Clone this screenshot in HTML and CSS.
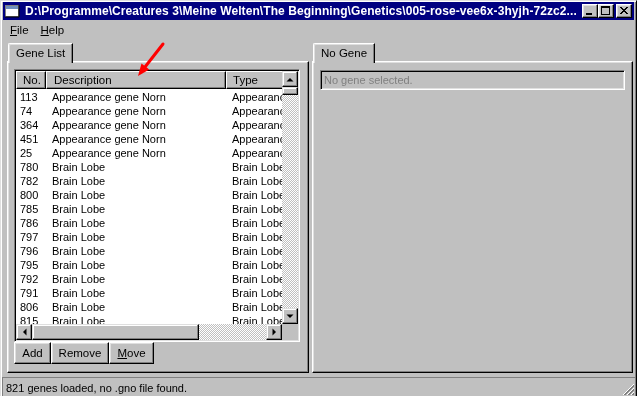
FILE: index.html
```html
<!DOCTYPE html>
<html lang="de">
<head>
    <meta charset="UTF-8">
    <title>Genetics Kit</title>
    <link rel="stylesheet" href="styles.css">
</head>
<body>
    <div class="window">
        <div class="titlebar">
            <svg class="app-icon" width="16" height="16" viewBox="0 0 16 16">
                <rect x="1.5" y="2.5" width="13" height="11" fill="#fff" stroke="#808080"/>
                <rect x="2" y="3" width="12" height="3" fill="#6f8fbf"/>
                <line x1="1" y1="14" x2="15" y2="14" stroke="#000"/>
                <line x1="15" y1="2" x2="15" y2="14" stroke="#000"/>
            </svg>
            <span class="title">D:\Programme\Creatures 3\Meine Welten\The Beginning\Genetics\005-rose-vee6x-3hyjh-72zc2...</span>
            <div class="caption-buttons">
                <div class="cap-btn">
                    <svg width="12" height="10" viewBox="0 0 12 10"><rect x="2" y="7" width="6" height="2" fill="#000"/></svg>
                </div>
                <div class="cap-btn">
                    <svg width="12" height="10" viewBox="0 0 12 10"><rect x="1.5" y="0.5" width="8" height="8" fill="none" stroke="#000"/><rect x="1" y="0" width="9" height="2" fill="#000"/></svg>
                </div>
                <div class="cap-btn close">
                    <svg width="12" height="10" viewBox="0 0 12 10"><path d="M2 1 L9 8 M3 1 L10 8 M9 1 L2 8 M10 1 L3 8" stroke="#000" stroke-width="1"/></svg>
                </div>
            </div>
        </div>

        <div class="menubar">
            <span class="menu-item"><u>F</u>ile</span>
            <span class="menu-item"><u>H</u>elp</span>
        </div>

        <div class="main">
            <div class="pane pane-left">
                <div class="tabs"><div class="tab active">Gene List</div></div>
                <div class="tab-panel">
                    <div class="listview">
                        <div class="lv-content">
                            <div class="lv-header">
                                <div class="hcell col-no">No.</div>
                                <div class="hcell col-desc">Description</div>
                                <div class="hcell col-type">Type</div>
                            </div>
                            <div class="lv-rows" id="rows"></div>
                        </div>
                        <div class="vscroll">
                            <div class="sb-btn">
                                <svg width="8" height="5" viewBox="0 0 8 5"><path d="M0.5 4.5 L4 1 L7.5 4.5Z" fill="#000"/></svg>
                            </div>
                            <div class="sb-thumb v"></div>
                            <div class="sb-track"></div>
                            <div class="sb-btn">
                                <svg width="8" height="5" viewBox="0 0 8 5"><path d="M0.5 0.5 L4 4 L7.5 0.5Z" fill="#000"/></svg>
                            </div>
                        </div>
                        <div class="hscroll">
                            <div class="sb-btn">
                                <svg width="5" height="8" viewBox="0 0 5 8"><path d="M4.5 0.5 L1 4 L4.5 7.5Z" fill="#000"/></svg>
                            </div>
                            <div class="sb-thumb h"></div>
                            <div class="sb-track"></div>
                            <div class="sb-btn">
                                <svg width="5" height="8" viewBox="0 0 5 8"><path d="M0.5 0.5 L4 4 L0.5 7.5Z" fill="#000"/></svg>
                            </div>
                        </div>
                        <div class="sb-corner"></div>
                    </div>
                    <div class="button-row">
                        <div class="btn btn-add">Add</div>
                        <div class="btn btn-remove">Remove</div>
                        <div class="btn btn-move"><u>M</u>ove</div>
                    </div>
                </div>
            </div>

            <div class="pane pane-right">
                <div class="tabs"><div class="tab active">No Gene</div></div>
                <div class="tab-panel">
                    <div class="field disabled">No gene selected.</div>
                </div>
            </div>
        </div>

        <div class="statusbar">
            <div class="status-field">821 genes loaded, no .gno file found.</div>
            <svg class="grip" width="13" height="13" viewBox="0 0 13 13">
                <path d="M12 1 L1 12 M12 5 L5 12 M12 9 L9 12" stroke="#fff"/>
                <path d="M12 2 L2 12 M12 3 L3 12 M12 6 L6 12 M12 7 L7 12 M12 10 L10 12 M12 11 L11 12" stroke="#808080"/>
            </svg>
        </div>

        <svg class="annotation" width="40" height="40" viewBox="0 0 40 40">
            <line x1="32" y1="3" x2="14.4" y2="25.5" stroke="#f00" stroke-width="3" stroke-linecap="round"/>
            <polygon points="7,35 18.3,28.6 10.5,22.4" fill="#f00"/>
        </svg>
    </div>

    <script>
        const genes = [
            ['113', 'Appearance gene Norn', 'Appearance'],
            ['74', 'Appearance gene Norn', 'Appearance'],
            ['364', 'Appearance gene Norn', 'Appearance'],
            ['451', 'Appearance gene Norn', 'Appearance'],
            ['25', 'Appearance gene Norn', 'Appearance'],
            ['780', 'Brain Lobe', 'Brain Lobe'],
            ['782', 'Brain Lobe', 'Brain Lobe'],
            ['800', 'Brain Lobe', 'Brain Lobe'],
            ['785', 'Brain Lobe', 'Brain Lobe'],
            ['786', 'Brain Lobe', 'Brain Lobe'],
            ['797', 'Brain Lobe', 'Brain Lobe'],
            ['796', 'Brain Lobe', 'Brain Lobe'],
            ['795', 'Brain Lobe', 'Brain Lobe'],
            ['792', 'Brain Lobe', 'Brain Lobe'],
            ['791', 'Brain Lobe', 'Brain Lobe'],
            ['806', 'Brain Lobe', 'Brain Lobe'],
            ['815', 'Brain Lobe', 'Brain Lobe']
        ];

        const rows = document.getElementById('rows');
        genes.forEach(function (g) {
            const row = document.createElement('div');
            row.className = 'lv-row';
            row.innerHTML = '<div class="cell col-no">' + g[0] + '</div>' +
                '<div class="cell col-desc">' + g[1] + '</div>' +
                '<div class="cell col-type">' + g[2] + '</div>';
            rows.appendChild(row);
        });
    </script>
</body>
</html>
```

FILE: styles.css
```css
* {
    box-sizing: border-box;
}

body {
    margin: 0;
    background: #c0c0c0;
    font-family: "Liberation Sans", Arial, sans-serif;
    font-size: 11px;
    color: #000;
    overflow: hidden;
}

.window {
    position: relative;
    width: 637px;
    height: 396px;
    display: flex;
    flex-direction: column;
    padding: 1px 1px 0 1px;
    border-top: 1px solid #dfdfdf;
    border-left: 1px solid #dfdfdf;
    border-right: 1px solid #000;
    box-shadow: inset 1px 1px #fff, inset -1px 0 #808080;
    will-change: transform;
}

/* title bar */
.titlebar {
    height: 18px;
    margin: 0 1px;
    background: #000080;
    color: #fff;
    display: flex;
    align-items: center;
    padding: 0 2px 0 1px;
}

.app-icon {
    flex: none;
    margin-right: 5px;
}

.title {
    flex: 1;
    font-weight: bold;
    font-size: 12px;
    letter-spacing: 0.08px;
    white-space: nowrap;
    overflow: hidden;
}

.caption-buttons {
    display: flex;
    flex: none;
}

.cap-btn {
    width: 16px;
    height: 14px;
    background: #c0c0c0;
    border: 1px solid;
    border-color: #fff #000 #000 #fff;
    box-shadow: inset -1px -1px #808080, inset 1px 1px #dfdfdf;
    display: flex;
    align-items: center;
    justify-content: center;
}

.cap-btn.close {
    margin-left: 2px;
}

/* menu */
.menubar {
    height: 19px;
    display: flex;
    align-items: center;
    padding-left: 2px;
}

.menu-item {
    padding: 0 6px;
    font-size: 11.5px;
}

/* panes */
.main {
    display: flex;
    padding: 4px 1px 0 5px;
    height: 334px;
}

.pane {
    display: flex;
    flex-direction: column;
    height: 330px;
}

.pane-left {
    width: 302px;
}

.pane-right {
    width: 321px;
    margin-left: 3px;
}

.tabs {
    display: flex;
    height: 18px;
    position: relative;
    z-index: 1;
}

.tab {
    height: 20px;
    padding: 3px 7px 0 7px;
    background: #c0c0c0;
    border-left: 1px solid #fff;
    border-top: 1px solid #fff;
    border-right: 1px solid #000;
    border-top-left-radius: 2px;
    box-shadow: inset -1px 0 #808080, inset 1px 1px #dfdfdf;
    font-size: 11.5px;
    margin-left: 1px;
}

.tab-panel {
    flex: 1;
    border: 1px solid;
    border-color: #fff #000 #000 #fff;
    box-shadow: inset -1px -1px #808080, inset 1px 1px #dfdfdf;
}

.pane-left .tab-panel {
    padding: 7px 8px 7px 6px;
}

.pane-right .tab-panel {
    padding: 8px 7px 7px 7px;
}

/* list view */
.listview {
    height: 273px;
    display: grid;
    grid-template-columns: 266px 16px;
    grid-template-rows: 253px 16px;
    border: 1px solid;
    border-color: #808080 #fff #fff #808080;
    box-shadow: inset 1px 1px #000, inset -1px -1px #dfdfdf;
    padding: 1px;
    background: #fff;
}

.lv-content {
    overflow: hidden;
    background: #fff;
}

.lv-header {
    display: flex;
    height: 18px;
    width: 280px;
}

.hcell {
    flex: none;
    height: 18px;
    background: #c0c0c0;
    border: 1px solid;
    border-color: #fff #000 #000 #fff;
    box-shadow: inset -1px -1px #808080;
    padding: 2px 0 0 6px;
    font-size: 11.5px;
    line-height: 13px;
}

.col-no {
    width: 30px;
}

.col-desc {
    width: 180px;
}

.col-type {
    width: 70px;
}

.hcell.col-desc {
    padding-left: 7px;
}

.lv-rows {
    padding-top: 1px;
}

.lv-row {
    display: flex;
    height: 14px;
    line-height: 14px;
    font-size: 11px;
    white-space: nowrap;
}

.cell {
    flex: none;
    overflow: hidden;
}

.cell.col-no {
    padding-left: 4px;
}

.cell.col-desc,
.cell.col-type {
    padding-left: 6px;
}

.cell.col-type {
    width: 40px;
    overflow: visible;
}

/* scroll bars */
.vscroll,
.hscroll {
    display: flex;
}

.vscroll {
    flex-direction: column;
}

.sb-btn {
    width: 16px;
    height: 16px;
    flex: none;
    background: #c0c0c0;
    border: 1px solid;
    border-color: #dfdfdf #000 #000 #dfdfdf;
    box-shadow: inset -1px -1px #808080, inset 1px 1px #fff;
    display: flex;
    align-items: center;
    justify-content: center;
}

.sb-thumb {
    flex: none;
    background: #c0c0c0;
    border: 1px solid;
    border-color: #dfdfdf #000 #000 #dfdfdf;
    box-shadow: inset -1px -1px #808080, inset 1px 1px #fff;
}

.sb-thumb.v {
    height: 8px;
}

.sb-thumb.h {
    width: 167px;
}

.sb-track {
    flex: 1;
    background-image: repeating-conic-gradient(#fff 0 25%, #c0c0c0 0 50%);
    background-size: 2px 2px;
}

.sb-corner {
    background: #c0c0c0;
}

/* buttons */
.button-row {
    display: flex;
    margin-top: 0;
}

.btn {
    height: 22px;
    background: #c0c0c0;
    border: 1px solid;
    border-color: #fff #000 #000 #fff;
    box-shadow: inset -1px -1px #808080, inset 1px 1px #dfdfdf;
    font-size: 11.5px;
    display: flex;
    align-items: center;
    justify-content: center;
}

.btn-add {
    width: 37px;
}

.btn-remove {
    width: 58px;
}

.btn-move {
    width: 45px;
}

/* right pane */
.field {
    height: 20px;
    border: 1px solid;
    border-color: #808080 #fff #fff #808080;
    box-shadow: inset 1px 1px #000, inset -1px -1px #dfdfdf;
    padding: 3px 0 0 3px;
    font-size: 11px;
}

.field.disabled {
    color: #808080;
}

/* status bar */
.statusbar {
    position: relative;
    padding-top: 4px;
    flex: 1;
}

.status-field {
    height: 19px;
    border-top: 1px solid #808080;
    border-left: 1px solid #808080;
    padding: 4px 0 0 3px;
    font-size: 11px;
}

.grip {
    position: absolute;
    right: 0;
    bottom: 0;
}

.annotation {
    position: absolute;
    left: 130px;
    top: 40px;
}
```
